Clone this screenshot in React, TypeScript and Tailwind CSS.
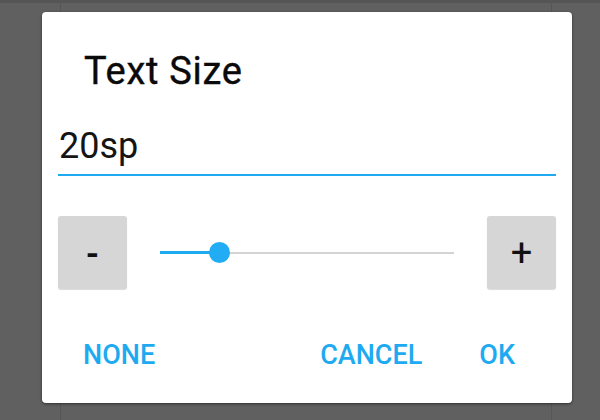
import React from "react";

export default function App() {
  return (
    <div
      className="relative w-[600px] h-[420px] bg-[#606060] overflow-hidden"
      style={{ fontFamily: "Roboto, 'Noto Sans', sans-serif" }}
    >
      <div className="absolute left-0 top-0 w-[600px] h-[3px] bg-[#555555]" />
      <div className="absolute left-[60px] top-0 w-px h-[420px] bg-[#565656]" />
      <div className="absolute left-[551px] top-0 w-px h-[420px] bg-[#565656]" />
      <div className="relative pl-[42px] pt-[12px]">
        <div className="w-[530px] h-[391px] bg-white rounded-[4px] shadow-[0_1px_3px_rgba(0,0,0,0.5)] flex flex-col">
          <div className="pl-[42px] pt-[40px] text-[38px] leading-none font-normal tracking-[0.7px] text-[#0a0a0a] [-webkit-text-stroke:0.4px_#0a0a0a]">
            Text Size
          </div>
          <div className="px-[16px] pt-[38px]">
            <div className="pl-[1px] text-[36px] leading-none text-[#151515]">20sp</div>
            <div className="mt-[10px] h-[2px] bg-[#1eaaf1]" />
          </div>
          <div className="px-[16px] pt-[40px] flex items-center">
            <div className="w-[69px] h-[73px] rounded-[3px] bg-[#d6d6d6] shadow-[0_1px_1px_rgba(0,0,0,0.15)] flex items-center justify-center text-[34px] leading-none font-bold text-[#111111]">
              -
            </div>
            <div className="flex-1 px-[33px]">
              <div className="relative h-[20px] flex items-center">
                <div className="w-[59px] h-[3px] bg-[#1eaaf1]" />
                <div className="flex-1 h-[2px] bg-[#d4d4d4]" />
                <div className="absolute left-[49px] top-[-0.5px] w-[21px] h-[21px] rounded-full bg-[#22acf3]" />
              </div>
            </div>
            <div className="w-[69px] h-[73px] rounded-[3px] bg-[#d6d6d6] shadow-[0_1px_1px_rgba(0,0,0,0.15)] flex items-center justify-center text-[38px] leading-none font-normal text-[#111111]">
              +
            </div>
          </div>
          <div className="flex items-center pl-[41px] pr-[57px] pt-[53px] text-[27px] leading-none font-medium text-[#1eaaf1]">
            <span>NONE</span>
            <span className="ml-auto">CANCEL</span>
            <span className="ml-[57px]">OK</span>
          </div>
        </div>
      </div>
    </div>
  );
}
